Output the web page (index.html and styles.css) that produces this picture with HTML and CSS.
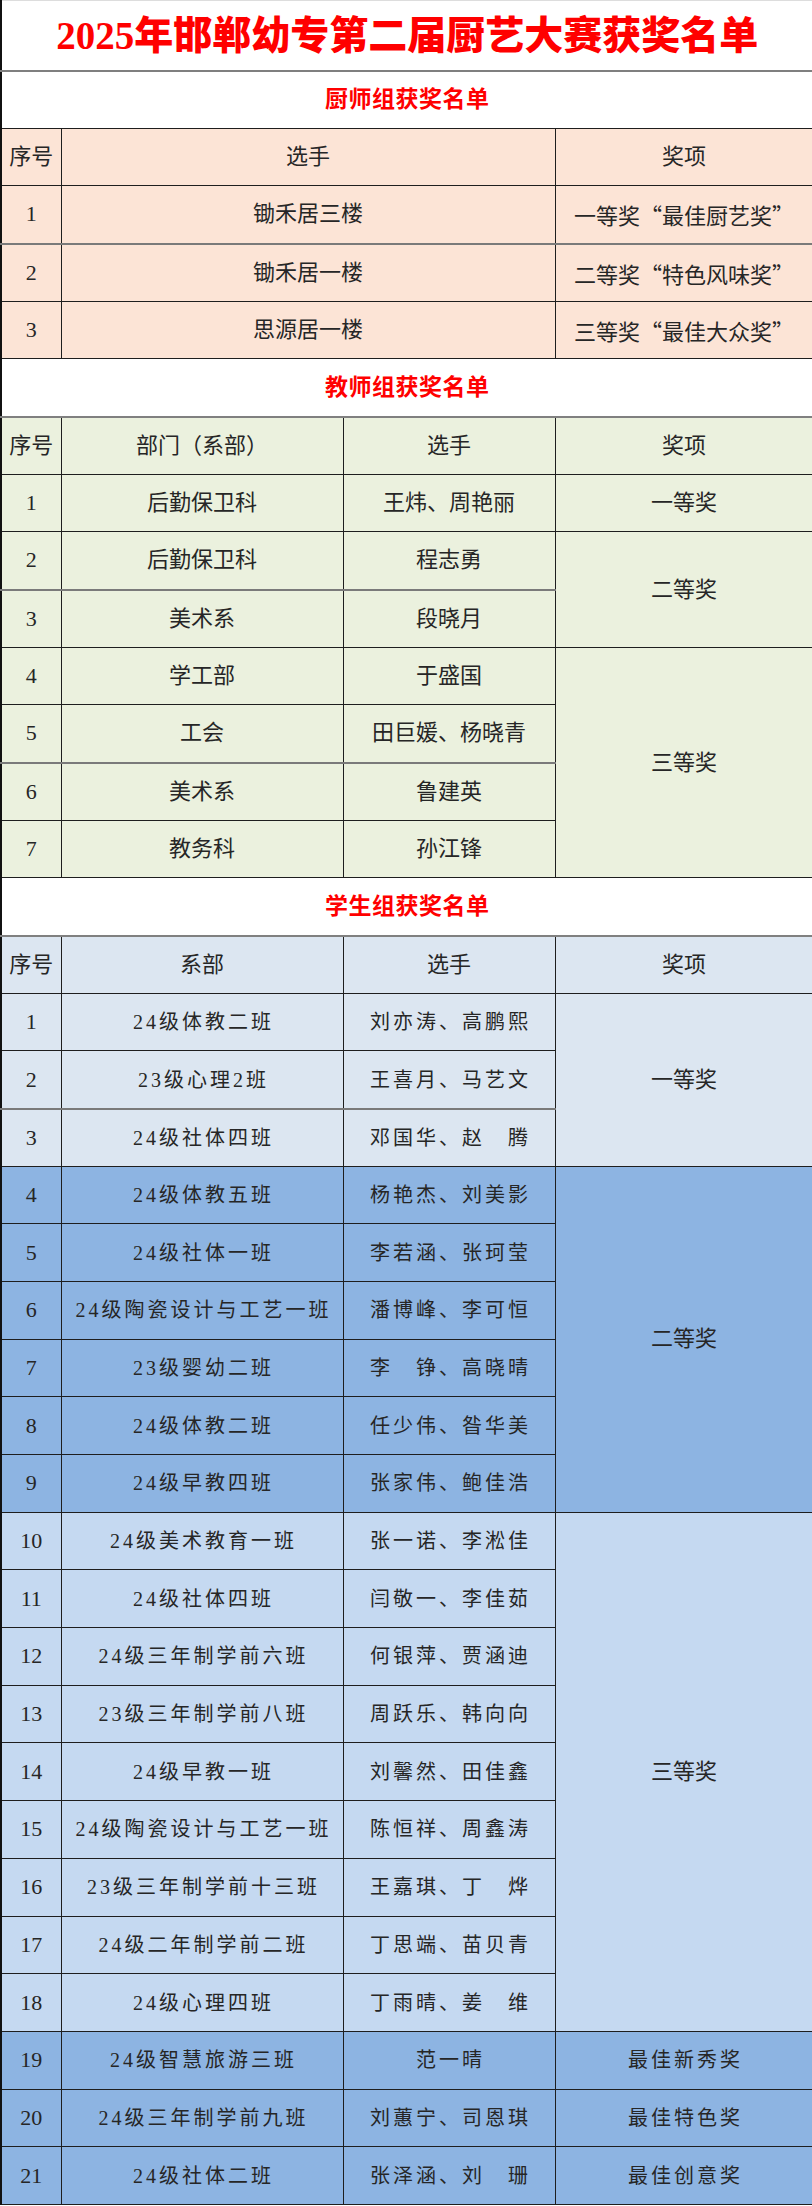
FILE: index.html
```html
<!DOCTYPE html>
<html lang="zh-CN">
<head>
<meta charset="utf-8">
<title>2025年邯郸幼专第二届厨艺大赛获奖名单</title>
<link rel="stylesheet" href="styles.css">
</head>
<body>
<table class="sheet">
  <colgroup>
    <col class="c-no"><col class="c-dept"><col class="c-name"><col class="c-award">
  </colgroup>
  <tbody>
    <tr class="r-title"><td colspan="4" class="main-title">2025年邯郸幼专第二届厨艺大赛获奖名单</td></tr>

    <tr class="r"><td colspan="4" class="sec">厨师组获奖名单</td></tr>
    <tr class="r chef"><td>序号</td><td colspan="2">选手</td><td>奖项</td></tr>
    <tr class="r chef gray-b"><td>1</td><td colspan="2">锄禾居三楼</td><td class="q">一等奖“最佳厨艺奖”</td></tr>
    <tr class="r chef"><td>2</td><td colspan="2">锄禾居一楼</td><td class="q">二等奖“特色风味奖”</td></tr>
    <tr class="r chef"><td>3</td><td colspan="2">思源居一楼</td><td class="q">三等奖“最佳大众奖”</td></tr>

    <tr class="r"><td colspan="4" class="sec sec-gray">教师组获奖名单</td></tr>
    <tr class="r teach"><td>序号</td><td>部门（系部）</td><td>选手</td><td>奖项</td></tr>
    <tr class="r teach"><td>1</td><td>后勤保卫科</td><td>王炜、周艳丽</td><td>一等奖</td></tr>
    <tr class="r teach gray-b"><td>2</td><td>后勤保卫科</td><td>程志勇</td><td rowspan="2">二等奖</td></tr>
    <tr class="r teach"><td>3</td><td>美术系</td><td>段晓月</td></tr>
    <tr class="r teach"><td>4</td><td>学工部</td><td>于盛国</td><td rowspan="4">三等奖</td></tr>
    <tr class="r teach gray-b"><td>5</td><td>工会</td><td>田巨媛、杨晓青</td></tr>
    <tr class="r teach"><td>6</td><td>美术系</td><td>鲁建英</td></tr>
    <tr class="r teach"><td>7</td><td>教务科</td><td>孙江锋</td></tr>

    <tr class="r"><td colspan="4" class="sec sec-gray">学生组获奖名单</td></tr>
    <tr class="r stu-a"><td>序号</td><td>系部</td><td>选手</td><td>奖项</td></tr>
    <tr class="r stu-a sp"><td>1</td><td>24级体教二班</td><td>刘亦涛、高鹏熙</td><td rowspan="3" class="big">一等奖</td></tr>
    <tr class="r stu-a sp gray-b"><td>2</td><td>23级心理2班</td><td>王喜月、马艺文</td></tr>
    <tr class="r stu-a sp"><td>3</td><td>24级社体四班</td><td>邓国华、赵　腾</td></tr>

    <tr class="r stu-b sp"><td>4</td><td>24级体教五班</td><td>杨艳杰、刘美影</td><td rowspan="6" class="big">二等奖</td></tr>
    <tr class="r stu-b sp"><td>5</td><td>24级社体一班</td><td>李若涵、张珂莹</td></tr>
    <tr class="r stu-b sp"><td>6</td><td>24级陶瓷设计与工艺一班</td><td>潘博峰、李可恒</td></tr>
    <tr class="r stu-b sp"><td>7</td><td>23级婴幼二班</td><td>李　铮、高晓晴</td></tr>
    <tr class="r stu-b sp"><td>8</td><td>24级体教二班</td><td>任少伟、昝华美</td></tr>
    <tr class="r stu-b sp"><td>9</td><td>24级早教四班</td><td>张家伟、鲍佳浩</td></tr>

    <tr class="r stu-c sp"><td>10</td><td>24级美术教育一班</td><td>张一诺、李淞佳</td><td rowspan="9" class="big">三等奖</td></tr>
    <tr class="r stu-c sp"><td>11</td><td>24级社体四班</td><td>闫敬一、李佳茹</td></tr>
    <tr class="r stu-c sp"><td>12</td><td>24级三年制学前六班</td><td>何银萍、贾涵迪</td></tr>
    <tr class="r stu-c sp"><td>13</td><td>23级三年制学前八班</td><td>周跃乐、韩向向</td></tr>
    <tr class="r stu-c sp"><td>14</td><td>24级早教一班</td><td>刘馨然、田佳鑫</td></tr>
    <tr class="r stu-c sp"><td>15</td><td>24级陶瓷设计与工艺一班</td><td>陈恒祥、周鑫涛</td></tr>
    <tr class="r stu-c sp"><td>16</td><td>23级三年制学前十三班</td><td>王嘉琪、丁　烨</td></tr>
    <tr class="r stu-c sp"><td>17</td><td>24级二年制学前二班</td><td>丁思端、苗贝青</td></tr>
    <tr class="r stu-c sp"><td>18</td><td>24级心理四班</td><td>丁雨晴、姜　维</td></tr>

    <tr class="r stu-b sp"><td>19</td><td>24级智慧旅游三班</td><td>范一晴</td><td>最佳新秀奖</td></tr>
    <tr class="r stu-b sp"><td>20</td><td>24级三年制学前九班</td><td>刘蕙宁、司恩琪</td><td>最佳特色奖</td></tr>
    <tr class="r stu-b sp"><td>21</td><td>24级社体二班</td><td>张泽涵、刘　珊</td><td>最佳创意奖</td></tr>
  </tbody>
</table>
</body>
</html>
```

FILE: styles.css
```css
html, body {
  margin: 0;
  padding: 0;
  background: #ffffff;
}

.sheet {
  width: 812px;
  border-collapse: collapse;
  table-layout: fixed;
  font-family: "Liberation Serif", "Noto Sans CJK SC", serif;
  color: #262626;
}

.c-no { width: 60px; }
.c-dept { width: 282px; }
.c-name { width: 212px; }
.c-award { width: 258px; }

.sheet td {
  border: 1px solid #1e1e1e;
  padding: 0;
  text-align: center;
  vertical-align: middle;
  font-size: 22px;
  line-height: 1;
  white-space: nowrap;
  overflow: hidden;
}

.sheet td:first-child { border-left: 2px solid #111111; }

.r { height: 57.68px; }

.r-title { height: 70px; }
.sheet .main-title {
  font-family: "Liberation Serif", "Noto Sans CJK SC", serif;
  font-size: 39px;
  font-weight: 900;
  color: #ff0000;
  background: #ffffff;
  border-top: 1px solid #dddddd;
  border-left: 1px solid #dddddd;
  border-right: 1px solid #dddddd;
  border-bottom: 2px solid #7f7f7f;
}

.sheet .sec {
  background: #ffffff;
  color: #ff0000;
  font-size: 23px;
  font-weight: 700;
  letter-spacing: 0.5px;
}
.sheet .sec-gray { border-bottom: 2px solid #808080; }

.chef td { background: #fce4d6; }
.teach td { background: #ebf1de; }
.stu-a td { background: #dce6f1; }
.stu-b td { background: #8db4e2; }
.stu-c td { background: #c5d9f1; }

.sheet .q { font-family: "Noto Sans CJK SC", sans-serif; }

.sheet .sp td { font-size: 20px; letter-spacing: 3px; padding-left: 3px; }
.sheet .sp td:first-child { font-size: 22px; letter-spacing: 0; padding-left: 0; }
.sheet .sp td.big { font-size: 22px; letter-spacing: 0; padding-left: 0; }

.sheet .gray-b td { border-bottom: 2px solid #7a7a7a; }
.sheet .gray-b td[rowspan] { border-bottom: 1px solid #1e1e1e; }
```
